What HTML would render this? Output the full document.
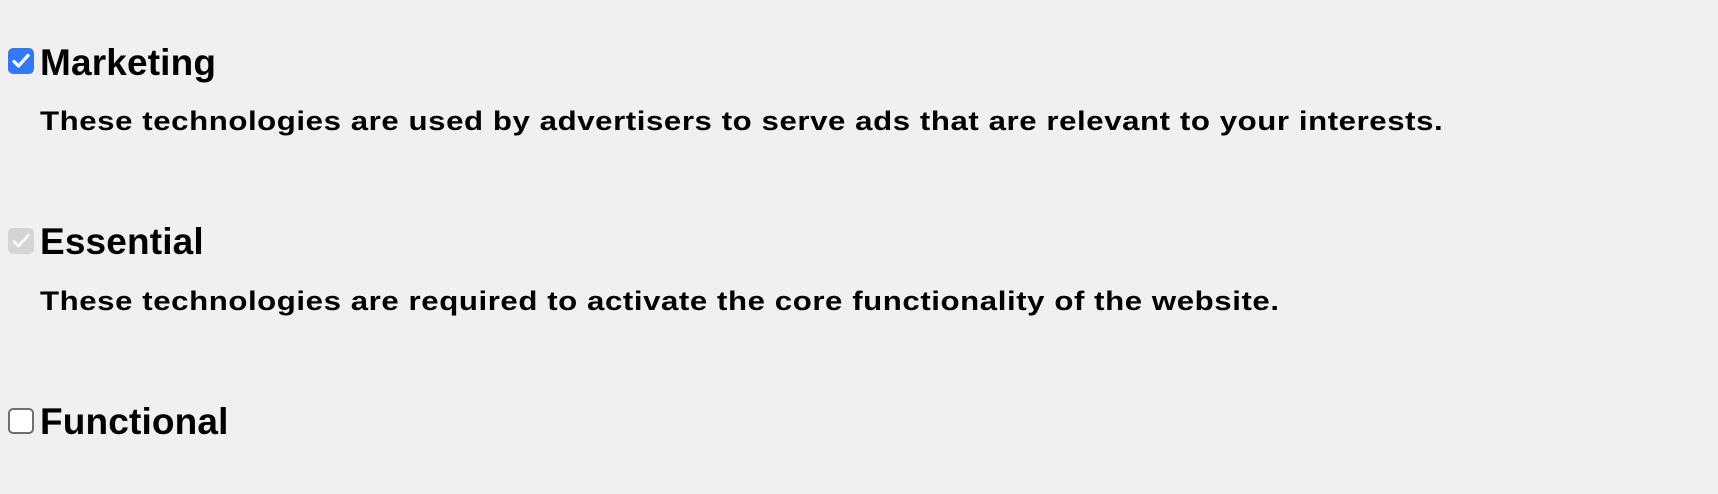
<!DOCTYPE html>
<html><head><style>
html,body{margin:0;padding:0;background:#f0f0f3;width:1718px;height:494px;overflow:hidden}
body{font-family:"Liberation Sans",Arial,sans-serif;font-weight:bold;color:#000;position:relative}
.cb{position:absolute;left:8px;width:26px;height:26px;box-sizing:border-box;border-radius:5px}
.h{position:absolute;left:40px;font-size:37px;line-height:1;white-space:nowrap;letter-spacing:0.15px}
.d{position:absolute;left:40px;font-size:27px;line-height:1;white-space:nowrap;letter-spacing:0.5px;transform:scaleX(1.155);transform-origin:0 0}
</style></head><body>
<div class="cb" style="top:48px;background:#3478f6"><svg width="26" height="26" viewBox="0 0 26 26"><path d="M6 13.5l4.5 4.5L20 7.5" fill="none" stroke="#fff" stroke-width="3.2" stroke-linecap="round" stroke-linejoin="round"/></svg></div>
<div class="h" style="top:44px">Marketing</div>
<div class="d" style="top:108px">These technologies are used by advertisers to serve ads that are relevant to your interests.</div>
<div class="cb" style="top:228px;background:#d4d4d6"><svg width="26" height="26" viewBox="0 0 26 26"><path d="M6 13.5l4.5 4.5L20 7.5" fill="none" stroke="#f4f4f4" stroke-width="3.2" stroke-linecap="round" stroke-linejoin="round"/></svg></div>
<div class="h" style="top:223px">Essential</div>
<div class="d" style="top:288px">These technologies are required to activate the core functionality of the website.</div>
<div class="cb" style="top:408px;background:#fff;border:2px solid #707070"></div>
<div class="h" style="top:403px">Functional</div>
</body></html>
